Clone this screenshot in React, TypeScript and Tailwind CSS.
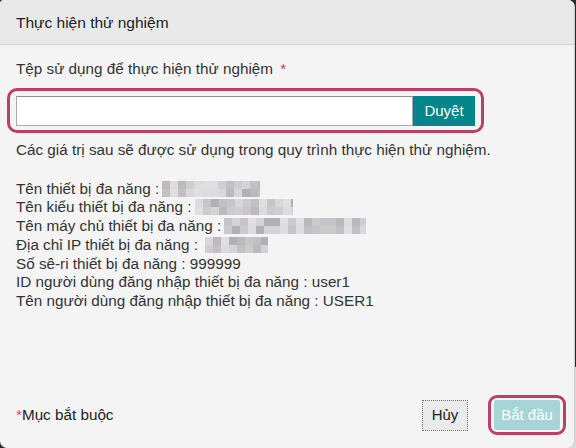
import React from "react";

const palette = ["#d4d3d7", "#cbcacd", "#dcdbde", "#c2c0c4", "#d8d7db", "#b3b0b5", "#c7c5c9", "#dfdfe1", "#bdb9bb", "#d0ced2"];

function Mosaic({ width, seed, gap = 3 }: { width: number; seed: number; gap?: number }) {
  const cols = Math.ceil(width / 8);
  const rows = [0, 1];
  return (
    <span className="inline-flex flex-col align-middle -mt-[2px]" style={{ width, marginLeft: gap }}>
      {rows.map((r) => (
        <span key={r} className="flex h-[8px] overflow-hidden">
          {Array.from({ length: cols }).map((_, c) => {
            const idx = (seed * 7 + c * 13 + r * 5 + ((c * c + seed) % 7)) % palette.length;
            return <span key={c} className="h-[8px] w-[8px] shrink-0" style={{ background: palette[idx] }} />;
          })}
        </span>
      ))}
    </span>
  );
}

export default function App() {
  const font = { fontFamily: '"Liberation Sans", Arial, sans-serif' };
  return (
    <div
      className="w-[576px] h-[448px] bg-[linear-gradient(135deg,#2a2a2a_92%,#d8d8d8_92%)]"
      style={font}
    >
      <div className="w-[575px] h-[448px] flex flex-col bg-[#f4f4f4] rounded-tl-[4px] rounded-tr-[7px] rounded-bl-[7px] rounded-br-[8px] overflow-hidden border-r border-[#cfcfcf]">
        <div className="h-[45px] shrink-0 bg-[#e9e9e9] border-b border-[#d2d2d2] px-4 pt-[14px] text-[15.5px] leading-[18px] text-[#222]">
          Thực hiện thử nghiệm
        </div>
        <div className="flex-1 flex flex-col px-4 pt-[15px] text-[15.25px] text-[#333]">
          <div className="leading-[17px]">
            Tệp sử dụng để thực hiện thử nghiệm <span className="text-[#c0406a] ml-[3px]">*</span>
          </div>
          <div className="mt-[11px] -ml-[9px] w-[477px] h-[45px] border-[3px] border-[#b8406b] rounded-[10px] pl-[6px] pr-[6px] pt-[5px] pb-[4px] flex">
            <div className="flex-1 h-[30px] bg-white border border-[#a9a9a9] border-t-[#8f8f8f]" />
            <div className="w-[62px] h-[30px] bg-[#02868b] text-white text-[15px] flex items-center justify-center">
              Duyệt
            </div>
          </div>
          <div className="mt-[8px] leading-[18.7px]">
            Các giá trị sau sẽ được sử dụng trong quy trình thực hiện thử nghiệm.
          </div>
          <div className="mt-[20px] leading-[18.7px]">
            <div>
              Tên thiết bị đa năng :<Mosaic width={98} seed={1} />
            </div>
            <div>
              Tên kiểu thiết bị đa năng :<Mosaic width={98} seed={4} />
            </div>
            <div>
              Tên máy chủ thiết bị đa năng :<Mosaic width={142} seed={2} />
            </div>
            <div>
              Địa chỉ IP thiết bị đa năng :<Mosaic width={63} seed={3} gap={7} />
            </div>
            <div>Số sê-ri thiết bị đa năng : 999999</div>
            <div>ID người dùng đăng nhập thiết bị đa năng : user1</div>
            <div>Tên người dùng đăng nhập thiết bị đa năng : USER1</div>
          </div>
          <div className="flex-1" />
          <div className="flex items-center justify-between pb-[13px] -mr-[8px]">
            <div className="leading-[16px] text-[#222]">
              <span className="text-[#c0507a]">*</span>Mục bắt buộc
            </div>
            <div className="flex items-center">
              <div className="w-[46px] h-[31px] bg-[#ebebeb] border border-dotted border-[#6f6f6f] text-[15px] text-[#222] flex items-center justify-center">
                Hủy
              </div>
              <div className="ml-[20px] w-[78px] h-[40px] border-[3px] border-[#b8406b] rounded-[9px] px-[3px] py-[2px]">
                <div className="w-full h-[30px] bg-[#a7d4d6] text-white text-[15px] flex items-center justify-center rounded-[2px]">
                  Bắt đầu
                </div>
              </div>
            </div>
          </div>
        </div>
      </div>
    </div>
  );
}
